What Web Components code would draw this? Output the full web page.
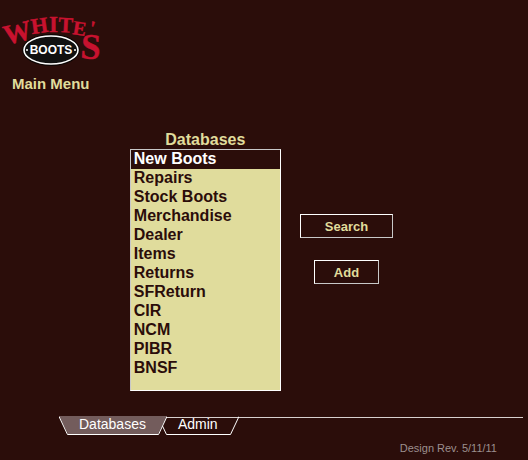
<!DOCTYPE html>
<html lang="en">
<head>
<meta charset="utf-8">
<title>White's Boots - Main Menu</title>
<style>
  body {
    margin: 0;
    background: #2b0d0a;
    color: #e0dc9c;
    font-family: "Liberation Sans", Arial, sans-serif;
  }
</style>
</head>
<body>
<menu-page>
  <boots-logo slot="header"></boots-logo>
  <page-title slot="header">Main Menu</page-title>
  <database-list label="Databases"></database-list>
  <action-stack>
    <action-button wide>Search</action-button>
    <action-button>Add</action-button>
  </action-stack>
  <tab-strip slot="footer">
    <tab-item active>Databases</tab-item>
    <tab-item>Admin</tab-item>
  </tab-strip>
  <design-note slot="footer">Design Rev. 5/11/11</design-note>
</menu-page>

<script>
class MenuPage extends HTMLElement {
  constructor() {
    super();
    this.attachShadow({ mode: "open" });
  }

  connectedCallback() {
    this.shadowRoot.innerHTML = /* html */`
<style>
  :host { display: block; padding: 8px 5px 4px 0; }
  header { display: flex; flex-direction: column; align-items: flex-start; }
  main { display: flex; justify-content: center; gap: 19px; margin-top: 38px; }
  footer { display: flex; flex-direction: column; margin-top: 25px; }
</style>
<header><slot name="header"></slot></header>
<main><slot></slot></main>
<footer><slot name="footer"></slot></footer>`;
  }
}

class BootsLogo extends HTMLElement {
  constructor() {
    super();
    this.attachShadow({ mode: "open" });
  }

  connectedCallback() {
    this.shadowRoot.innerHTML = /* html */`
<style>
  :host { display: block; }
  svg { display: block; overflow: visible; }
  .arch {
    font-family: "Liberation Serif", serif;
    font-weight: bold;
    fill: #c8122f;
    stroke: #c8122f;
    stroke-width: .4px;
  }
  .boots {
    font: bold 12px "Liberation Sans", sans-serif;
    fill: #fff;
  }
</style>
<svg width="108" height="60" viewBox="0 8 108 60" role="img" aria-label="White's Boots">
  <g class="arch">
    <text font-size="28" transform="translate(6 45) rotate(-14)">W</text>
    <text font-size="22" transform="translate(32 34) rotate(-8)">H</text>
    <text font-size="23" transform="translate(49 32)">I</text>
    <text font-size="22" transform="translate(58 32) rotate(3)">T</text>
    <text font-size="20" transform="translate(72 34) rotate(9)">E</text>
    <text font-size="20" transform="translate(88 34) rotate(12)">'</text>
    <text font-size="36" transform="translate(80 58) rotate(4)">S</text>
  </g>
  <ellipse cx="51" cy="50" rx="29" ry="16" fill="#0d0605"/>
  <ellipse cx="51" cy="50" rx="27" ry="14" fill="#111" stroke="#fff" stroke-width="1.6"/>
  <text class="boots" x="51" y="54" text-anchor="middle">BOOTS</text>
  <circle cx="27" cy="50" r="1" fill="#fff"/>
  <circle cx="75" cy="50" r="1" fill="#fff"/>
</svg>`;
  }
}

class PageTitle extends HTMLElement {
  constructor() {
    super();
    this.attachShadow({ mode: "open" });
  }

  connectedCallback() {
    this.shadowRoot.innerHTML = /* html */`
<style>
  :host { display: block; padding: 7px 0 0 12px; }
  h1 { margin: 0; font-size: 15px; line-height: 18px; }
</style>
<h1><slot></slot></h1>`;
  }
}

class DatabaseList extends HTMLElement {
  constructor() {
    super();
    this.attachShadow({ mode: "open" });
  }

  connectedCallback() {
    const names = ["New Boots", "Repairs", "Stock Boots", "Merchandise", "Dealer", "Items",
      "Returns", "SFReturn", "CIR", "NCM", "PIBR", "BNSF"];
    const options = names.map((n, i) => `<option${i === 0 ? " selected" : ""}>${n}</option>`).join("");
    this.shadowRoot.innerHTML = /* html */`
<style>
  :host { display: flex; flex-direction: column; font-weight: bold; font-size: 16px; }
  label { text-align: center; line-height: 18px; }
  select {
    box-sizing: border-box;
    width: 151px;
    height: 242px;
    padding: 0;
    border: 1px solid #fff;
    border-color: #c8c8c8 #fff #fff #c8c8c8;
    border-radius: 0;
    outline: none;
    background: #e0dc9c;
    color: #2b0d0a;
    font: inherit;
    scrollbar-width: none;
  }
  option {
    box-sizing: border-box;
    height: 19px;
    min-height: 19px;
    padding: 0 3px;
    font-weight: bold;
    line-height: 18px;
    color: #2b0d0a;
  }
  option:checked {
    background: #2b0d0a linear-gradient(#2b0d0a, #2b0d0a);
    color: #fff;
  }
</style>
<label for="list">${this.getAttribute("label")}</label>
<select id="list" size="12">${options}</select>`;
  }
}

class ActionStack extends HTMLElement {
  constructor() {
    super();
    this.attachShadow({ mode: "open" });
  }

  connectedCallback() {
    this.shadowRoot.innerHTML = /* html */`
<style>
  :host {
    display: flex;
    flex-direction: column;
    align-items: center;
    gap: 22px;
    padding-top: 83px;
  }
</style>
<slot></slot>`;
  }
}

class ActionButton extends HTMLElement {
  constructor() {
    super();
    this.attachShadow({ mode: "open" });
  }

  connectedCallback() {
    this.shadowRoot.innerHTML = /* html */`
<style>
  :host { display: block; }
  button {
    display: block;
    height: 24px;
    padding: 0 19px;
    border: 1px solid #fff;
    border-color: #fff #c8c8c8 #c8c8c8 #fff;
    background: none;
    color: inherit;
    font: bold 13px "Liberation Sans", Arial, sans-serif;
    cursor: pointer;
  }
  :host([wide]) button { padding: 0 24px; }
</style>
<button type="button"><slot></slot></button>`;
  }
}

class TabStrip extends HTMLElement {
  constructor() {
    super();
    this.attachShadow({ mode: "open" });
  }

  connectedCallback() {
    this.shadowRoot.innerHTML = /* html */`
<style>
  :host { display: block; margin-left: 59px; }
  nav {
    display: flex;
    background: linear-gradient(#d8d0cf, #d8d0cf) 0 1px / 100% 1px no-repeat;
  }
</style>
<nav><slot></slot></nav>`;
  }
}

class TabItem extends HTMLElement {
  constructor() {
    super();
    this.attachShadow({ mode: "open" });
  }

  connectedCallback() {
    this.shadowRoot.innerHTML = /* html */`
<style>
  :host { display: block; --fill: none; --face: transparent; }
  :host(:not(:first-child)) { margin-left: -9px; }
  :host([active]) { --fill: #735c5c; --face: #735c5c; position: relative; z-index: 1; }
  /* a tab behind its neighbour only shows the lower part of its left edge */
  :host(:not([active])) .left { clip-path: inset(10px 0 0 4px); }
  button {
    display: flex;
    padding: 0;
    border: 0;
    background: none;
    color: #fff;
    font: 14px "Liberation Sans", Arial, sans-serif;
    cursor: pointer;
  }
  svg { display: block; fill: var(--fill); }
  path { stroke: #fff; }
  .face {
    box-sizing: border-box;
    height: 19px;
    padding: 0 12px 0 11px;
    border-bottom: 1px solid #fff;
    background: var(--face);
    line-height: 17px;
  }
</style>
<button type="button">
  <svg class="left" width="9" height="19"><polygon points="0,0 9,0 9,18"/><path d="M0 .5L8.5 18.5H9" fill="none"/></svg>
  <span class="face"><slot></slot></span>
  <svg width="9" height="19"><polygon points="0,0 9,0 0,18"/><path d="M9 .5L.5 18.5H0" fill="none"/></svg>
</button>`;
  }
}

class DesignNote extends HTMLElement {
  constructor() {
    super();
    this.attachShadow({ mode: "open" });
  }

  connectedCallback() {
    this.shadowRoot.innerHTML = /* html */`
<style>
  :host {
    display: block;
    padding: 6px 26px 0 0;
    color: #9c8f8e;
    font-size: 11px;
    line-height: 14px;
    text-align: right;
  }
</style>
<slot></slot>`;
  }
}

customElements.define("menu-page", MenuPage);
customElements.define("boots-logo", BootsLogo);
customElements.define("page-title", PageTitle);
customElements.define("database-list", DatabaseList);
customElements.define("action-stack", ActionStack);
customElements.define("action-button", ActionButton);
customElements.define("tab-strip", TabStrip);
customElements.define("tab-item", TabItem);
customElements.define("design-note", DesignNote);
</script>
</body>
</html>
